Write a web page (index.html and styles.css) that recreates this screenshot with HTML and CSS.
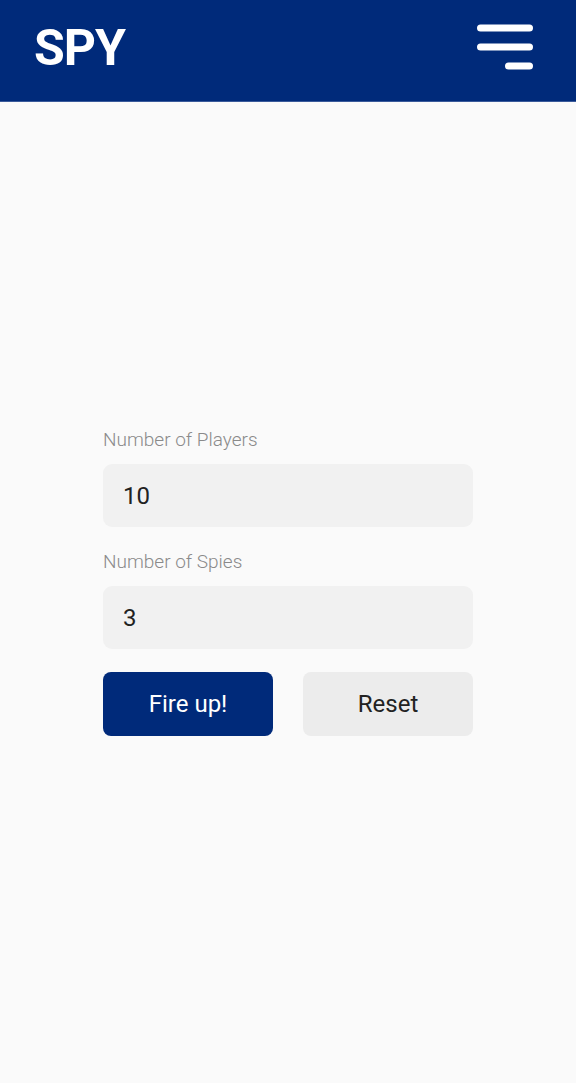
FILE: index.html
```html
<!DOCTYPE html>
<html lang="en">
<head>
<meta charset="utf-8">
<title>SPY</title>
<link rel="stylesheet" href="styles.css">
</head>
<body>
<header class="topbar">
  <div class="logo">SPY</div>
  <button class="menu" aria-label="Menu">
    <svg width="56" height="50" viewBox="0 0 56 50">
      <g stroke="#fff" stroke-width="7" stroke-linecap="round">
        <line x1="3.5" y1="6" x2="52.5" y2="6"/>
        <line x1="3.5" y1="25" x2="52.5" y2="25"/>
        <line x1="31.5" y1="44" x2="52.5" y2="44"/>
      </g>
    </svg>
  </button>
</header>
<main class="content">
  <form class="form">
    <label class="label">Number of Players</label>
    <div class="field">10</div>
    <label class="label second">Number of Spies</label>
    <div class="field">3</div>
    <div class="actions">
      <button type="button" class="btn primary">Fire up!</button>
      <button type="button" class="btn secondary">Reset</button>
    </div>
  </form>
</main>
</body>
</html>
```

FILE: styles.css
```css
* { box-sizing: border-box; }
html, body { margin: 0; padding: 0; }
body {
  background: #fafafa;
  font-family: Roboto, "Liberation Sans", sans-serif;
  min-height: 1083px;
}
.topbar {
  height: 102px;
  background: #002a7a;
  border-bottom: 1px solid #3a5a9a;
  display: flex;
  align-items: center;
  justify-content: space-between;
  padding: 0 43px 0 34px;
}
.logo {
  color: #fff;
  font-weight: 700;
  font-size: 50px;
  letter-spacing: -1px;
  line-height: 1;
  margin-top: -6px;
}
.menu {
  background: none;
  border: 0;
  padding: 0;
  display: flex;
  margin-top: -8px;
}
.content {
  padding-top: 326px;
  display: flex;
  justify-content: center;
}
.form {
  width: 370px;
  display: flex;
  flex-direction: column;
}
.label {
  font-size: 19px;
  font-weight: 300;
  color: #8a8a8a;
  line-height: 24px;
  margin-bottom: 12px;
}
.label.second { margin-top: 23px; }
.field {
  height: 63px;
  background: #f1f1f1;
  border-radius: 9px;
  display: flex;
  align-items: center;
  padding-left: 20px;
  font-size: 24px;
  color: #222;
}
.actions {
  display: flex;
  gap: 30px;
  margin-top: 23px;
}
.btn {
  flex: 1;
  height: 64px;
  border: 0;
  border-radius: 8px;
  font-family: Roboto, "Liberation Sans", sans-serif;
  font-size: 24px;
}
.btn.primary { background: #002a7a; color: #fff; }
.btn.secondary { background: #ececec; color: #222; }
```
